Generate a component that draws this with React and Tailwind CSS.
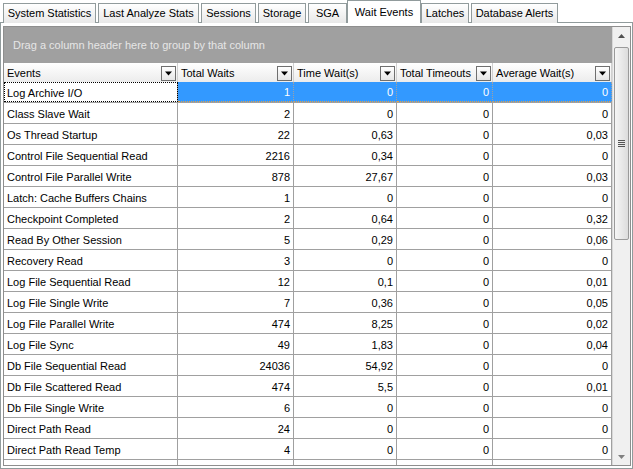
import React from 'react';

const tabs = [
  { label: 'System Statistics', cls: 'w-[93px] mr-[2px]' },
  { label: 'Last Analyze Stats', cls: 'w-[101px] mr-[2px]' },
  { label: 'Sessions', cls: 'w-[55px] mr-[2px]' },
  { label: 'Storage', cls: 'w-[48px] mr-[2px]' },
  { label: 'SGA', cls: 'w-[39px]' },
  { label: 'Wait Events', cls: 'w-[74px]', active: true },
  { label: 'Latches', cls: 'w-[48px] mr-[2px]' },
  { label: 'Database Alerts', cls: 'w-[87px]' },
];

const columns = [
  { title: 'Events', width: 'w-[174px]' },
  { title: 'Total Waits', width: 'w-[116px]' },
  { title: 'Time Wait(s)', width: 'w-[103px]' },
  { title: 'Total Timeouts', width: 'w-[96px]' },
  { title: 'Average Wait(s)', width: 'w-[119px]' },
];

const rows = [
  ['Log Archive I/O', '1', '0', '0', '0'],
  ['Class Slave Wait', '2', '0', '0', '0'],
  ['Os Thread Startup', '22', '0,63', '0', '0,03'],
  ['Control File Sequential Read', '2216', '0,34', '0', '0'],
  ['Control File Parallel Write', '878', '27,67', '0', '0,03'],
  ['Latch: Cache Buffers Chains', '1', '0', '0', '0'],
  ['Checkpoint Completed', '2', '0,64', '0', '0,32'],
  ['Read By Other Session', '5', '0,29', '0', '0,06'],
  ['Recovery Read', '3', '0', '0', '0'],
  ['Log File Sequential Read', '12', '0,1', '0', '0,01'],
  ['Log File Single Write', '7', '0,36', '0', '0,05'],
  ['Log File Parallel Write', '474', '8,25', '0', '0,02'],
  ['Log File Sync', '49', '1,83', '0', '0,04'],
  ['Db File Sequential Read', '24036', '54,92', '0', '0'],
  ['Db File Scattered Read', '474', '5,5', '0', '0,01'],
  ['Db File Single Write', '6', '0', '0', '0'],
  ['Direct Path Read', '24', '0', '0', '0'],
  ['Direct Path Read Temp', '4', '0', '0', '0'],
  ['', '', '', '', ''],
];

const DropButton = () => (
  <div className="w-[15px] h-[15px] border border-[#6f6f6f] bg-gradient-to-b from-white to-[#e6e6e6] flex items-center justify-center shrink-0">
    <svg width="9" height="5" viewBox="0 0 9 5">
      <path d="M1 0.5h7L4.5 4.5z" fill="#000" />
    </svg>
  </div>
);

const App = () => {
  return (
    <div className="w-[633px] h-[469px] bg-white overflow-hidden text-[11px] text-black" style={{ fontFamily: '"Liberation Sans", Arial, sans-serif' }}>
      {/* Tab strip */}
      <div className="h-[23px] flex items-end pl-[3px] relative z-10">
        {tabs.map((t) =>
          t.active ? (
            <div key={t.label} className={`${t.cls} h-[23px] bg-white border border-[#919b9c] border-b-0 flex justify-center items-start pt-[3px] shrink-0`}>
              {t.label}
            </div>
          ) : (
            <div key={t.label} className={`${t.cls} h-[20px] bg-gradient-to-b from-white to-[#e8e8e8] border border-[#919b9c] border-b-0 flex justify-center items-center shrink-0`}>
              {t.label}
            </div>
          )
        )}
      </div>

      {/* Panel */}
      <div className="h-[447px] -mt-[1px] border border-[#919b9c] pl-[2px] pr-[1px] pt-[3px] pb-[2px]">
        <div className="h-full border border-[#8e8e8e] flex overflow-hidden">
          <div className="w-[608px] shrink-0 flex flex-col">
            <div className="h-[36px] bg-[#a0a0a0] text-[#e6e6e6] flex items-center pl-[9px] shrink-0">
              Drag a column header here to group by that column
            </div>
            {/* header */}
            <div className="h-[19px] flex shrink-0 bg-gradient-to-b from-white to-[#ececec]">
              {columns.map((c) => (
                <div key={c.title} className={`${c.width} border-r border-[#d0d0d0] flex items-center justify-between pl-[3px] pr-[1px] pt-px`}>
                  <span>{c.title}</span>
                  <DropButton />
                </div>
              ))}
            </div>
            {/* rows */}
            {rows.map((r, i) => (
              <div key={i} className="h-[21px] flex shrink-0 border-b border-[#a0a0a0]">
                {r.map((v, j) => {
                  const selected = i === 0 && j > 0;
                  const focus = i === 0 && j === 0;
                  return (
                    <div
                      key={j}
                      className={`${columns[j].width} h-[20px] border-r border-[#a0a0a0] flex items-center pt-[2px] ${j === 0 ? 'pl-[3px]' : 'justify-end pr-[3px]'} ${selected ? 'bg-[#3399ff] text-white border-b border-dotted border-b-[#e8a040]' : ''} ${focus ? 'outline outline-1 outline-dotted outline-black -outline-offset-1' : ''}`}
                    >
                      {v}
                    </div>
                  );
                })}
              </div>
            ))}
          </div>

          {/* scrollbar */}
          <div className="flex-1 bg-[#f0f0f0] border-l border-[#d8d8d8] flex flex-col items-center">
            <div className="h-[18px] w-full flex items-center justify-center shrink-0">
              <svg width="7" height="4" viewBox="0 0 7 4"><path d="M0 4h7L3.5 0z" fill="#505050" /></svg>
            </div>
            <div className="w-[15px] h-[193px] mt-[2px] rounded-[2px] border border-[#9a9a9a] bg-gradient-to-r from-[#f6f6f6] to-[#dcdcdc] flex items-center justify-center">
              <div className="flex flex-col gap-[1px]">
                <div className="w-[7px] h-px bg-[#555]" />
                <div className="w-[7px] h-px bg-[#555]" />
                <div className="w-[7px] h-px bg-[#555]" />
                <div className="w-[7px] h-px bg-[#555]" />
              </div>
            </div>
            <div className="flex-1" />
            <div className="h-[16px] w-full flex items-center justify-center shrink-0">
              <svg width="7" height="4" viewBox="0 0 7 4"><path d="M0 0h7L3.5 4z" fill="#808080" /></svg>
            </div>
          </div>
        </div>
      </div>
    </div>
  );
};

export default App;
